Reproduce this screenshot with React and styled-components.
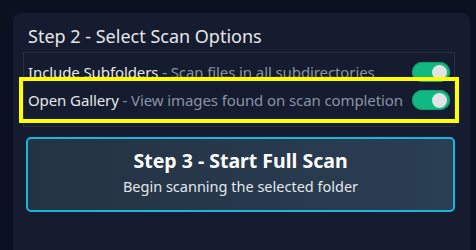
import styled, { createGlobalStyle } from "styled-components";

const GlobalStyle = createGlobalStyle`
    html, body {
        margin: 0;
        background: #0b1120;
        font-family: "Noto Sans", "Open Sans", sans-serif;
        overflow: hidden;
    }
`;

const Page = styled.div`
    padding: 13px 6px 0 13px;
    height: 250px;
    box-sizing: border-box;
`;

const Panel = styled.section`
    background: #151c2f;
    border-radius: 8px;
    padding: 11px 15px 60px 10px;
`;

const Title = styled.h2`
    margin: 0 0 4px 5px;
    font-size: 18px;
    line-height: 24px;
    font-weight: 400;
    color: #e5e7eb;
`;

const Options = styled.div`
    border: 1px solid #283044;
    padding: 9px 4px 16px 4px;
    display: flex;
    flex-direction: column;
    gap: 8px;
`;

const Row = styled.label`
    position: relative;
    display: flex;
    align-items: center;
    justify-content: space-between;
    height: 20px;

    ${(p) =>
        p.$highlighted &&
        `
        &::after {
            content: "";
            position: absolute;
            inset: -13px -9px;
            border: 4px solid #ffff00;
            pointer-events: none;
        }
    `}
`;

const Label = styled.span`
    font-size: 15px;
    letter-spacing: -0.1px;
    color: #e5e7eb;
    white-space: nowrap;
`;

const Desc = styled.span`
    color: #8b93a3;
`;

const Toggle = styled.span`
    width: 38px;
    height: 20px;
    border-radius: 10px;
    background: #10b981;
    box-shadow: inset 0 0 0 1px #0e9f70;
    display: flex;
    align-items: center;
    justify-content: flex-end;
    padding: 0 3px;
    box-sizing: border-box;

    &::before {
        content: "";
        width: 15px;
        height: 15px;
        border-radius: 50%;
        background: #e3e3e3;
    }
`;

const ScanButton = styled.button`
    display: flex;
    flex-direction: column;
    align-items: center;
    gap: 3px;
    width: 429px;
    margin: 10px 0 0 3px;
    padding: 10px 0 14px;
    border: 2px solid #1ab6dc;
    border-radius: 5px;
    background: linear-gradient(90deg, #243343 0%, #2a3e54 100%);
    font-family: inherit;
    cursor: pointer;
`;

const ButtonTitle = styled.span`
    font-size: 19.5px;
    line-height: 24px;
    font-weight: 700;
    color: #ffffff;
`;

const ButtonSub = styled.span`
    font-size: 14.5px;
    line-height: 20px;
    color: #e5e7eb;
`;

const options = [
    { name: "Include Subfolders", desc: "Scan files in all subdirectories" },
    { name: "Open Gallery", desc: "View images found on scan completion", highlighted: true },
];

export default function App() {
    return (
        <>
            <GlobalStyle />
            <Page>
                <Panel>
                    <Title>Step 2 - Select Scan Options</Title>
                    <Options>
                        {options.map((o) => (
                            <Row key={o.name} $highlighted={o.highlighted}>
                                <Label>
                                    {o.name} <Desc>- {o.desc}</Desc>
                                </Label>
                                <Toggle />
                            </Row>
                        ))}
                    </Options>
                    <ScanButton>
                        <ButtonTitle>Step 3 - Start Full Scan</ButtonTitle>
                        <ButtonSub>Begin scanning the selected folder</ButtonSub>
                    </ScanButton>
                </Panel>
            </Page>
        </>
    );
}
